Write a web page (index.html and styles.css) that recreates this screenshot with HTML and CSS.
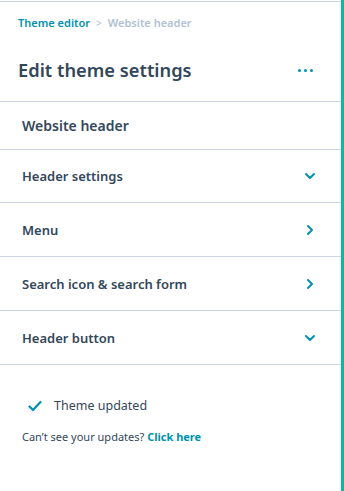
FILE: index.html
```html
<!DOCTYPE html>
<html>
<head>
<meta charset="utf-8">
<link rel="stylesheet" href="styles.css">
</head>
<body>
<div class="layout">
  <div class="panel">
    <div class="head">
      <nav class="crumbs">
        <span class="crumb-link">Theme editor</span>
        <span class="crumb-sep">&gt;</span>
        <span class="crumb-current">Website header</span>
      </nav>
      <div class="title-row">
        <h1 class="title">Edit theme settings</h1>
        <span class="dots"><i></i><i></i><i></i></span>
      </div>
    </div>
    <div class="section-title">Website header</div>
    <div class="row row-first"><span>Header settings</span>
      <svg class="icon" width="12" height="12" viewBox="0 0 12 12"><path d="M2 4 L6 8 L10 4" fill="none" stroke="#0091ae" stroke-width="2" stroke-linecap="round" stroke-linejoin="round"/></svg>
    </div>
    <div class="row"><span>Menu</span>
      <svg class="icon" width="12" height="12" viewBox="0 0 12 12"><path d="M4 2 L8 6 L4 10" fill="none" stroke="#0091ae" stroke-width="2" stroke-linecap="round" stroke-linejoin="round"/></svg>
    </div>
    <div class="row"><span>Search icon &amp; search form</span>
      <svg class="icon" width="12" height="12" viewBox="0 0 12 12"><path d="M4 2 L8 6 L4 10" fill="none" stroke="#0091ae" stroke-width="2" stroke-linecap="round" stroke-linejoin="round"/></svg>
    </div>
    <div class="row"><span>Header button</span>
      <svg class="icon" width="12" height="12" viewBox="0 0 12 12"><path d="M2 4 L6 8 L10 4" fill="none" stroke="#0091ae" stroke-width="2" stroke-linecap="round" stroke-linejoin="round"/></svg>
    </div>
    <div class="status">
      <div class="status-line">
        <svg class="check" width="14" height="12" viewBox="0 0 14 12"><path d="M1.5 6.5 L5 10 L12.5 2" fill="none" stroke="#0091ae" stroke-width="2.2" stroke-linecap="round" stroke-linejoin="round"/></svg>
        <span>Theme updated</span>
      </div>
      <p class="hint">Can’t see your updates? <b class="hint-link">Click here</b></p>
    </div>
  </div>
  <div class="accent"></div>
</div>
</body>
</html>
```

FILE: styles.css
```css
html, body {
  margin: 0;
  padding: 0;
  background: #fff;
}
body {
  font-family: "Noto Sans", "Open Sans", sans-serif;
  color: #33475b;
}
.layout {
  display: flex;
  width: 344px;
  height: 491px;
}
.panel {
  width: 341px;
  border-top: 1px solid #cbd6e2;
  margin-top: 1px;
}
.accent {
  width: 3px;
  background: #00bda5;
}
.head {
  padding: 13px 0 0 18px;
  height: 86px;
  border-bottom: 1px solid #cbd6e2;
}
.crumbs {
  display: flex;
  align-items: center;
  gap: 6px;
  font-size: 11px;
  font-weight: 600;
  line-height: 16px;
}
.crumb-link { color: #0091ae; }
.crumb-sep { color: #b0c1d4; font-size: 10px; font-weight: 400; }
.crumb-current { color: #b0c1d4; }
.title-row {
  display: flex;
  align-items: center;
  justify-content: space-between;
  margin-top: 27px;
  padding-right: 28px;
}
.title {
  margin: 0;
  font-size: 18.3px;
  font-weight: 600;
  line-height: 24px;
}
.dots {
  display: flex;
  gap: 3px;
}
.dots i {
  width: 3px;
  height: 3px;
  border-radius: 50%;
  background: #0091ae;
}
.section-title {
  height: 47px;
  display: flex;
  align-items: center;
  padding-left: 22px;
  font-size: 14px;
  font-weight: 600;
  border-bottom: 1px solid #cbd6e2;
}
.row {
  height: 53px;
  display: flex;
  align-items: center;
  justify-content: space-between;
  padding: 0 25px 0 22px;
  font-size: 13px;
  font-weight: 600;
  border-bottom: 1px solid #cbd6e2;
}
.row-first { height: 52px; }
.status {
  padding: 32px 0 0 22px;
}
.status-line {
  display: flex;
  align-items: center;
  gap: 12px;
  padding-left: 6px;
  font-size: 12.5px;
  line-height: 18px;
}
.hint {
  margin: 15px 0 0;
  font-size: 11px;
  line-height: 14px;
}
.hint-link {
  color: #0091ae;
  font-weight: 700;
}
```
